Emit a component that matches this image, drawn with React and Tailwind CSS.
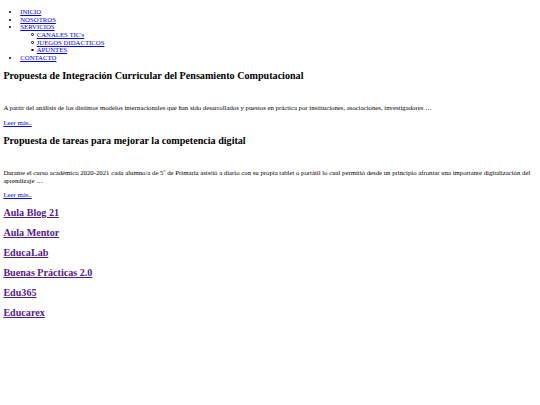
const nav = [
  { label: "INICIO" },
  { label: "NOSOTROS" },
  {
    label: "SERVICIOS",
    children: ["CANALES TIC's", "JUEGOS DIDACTICOS", "APUNTES"],
  },
  { label: "CONTACTO" },
];

const posts = [
  {
    title: "Propuesta de Integración Curricular del Pensamiento Computacional",
    text: "A partir del análisis de los distintos modelos internacionales que han sido desarrollados y puestos en práctica por instituciones, asociaciones, investigadores …",
  },
  {
    title: "Propuesta de tareas para mejorar la competencia digital",
    text: "Durante el curso académico 2020-2021 cada alumno/a de 5º de Primaria asistió a diario con su propia tablet o portátil lo cual permitió desde un principio afrontar una importante digitalización del aprendizaje …",
  },
];

const blogs = [
  "Aula Blog 21",
  "Aula Mentor",
  "EducaLab",
  "Buenas Prácticas 2.0",
  "Edu365",
  "Educarex",
];

const linkCls = "text-[#0000ee] underline";

const App = () => {
  return (
    <div className="flow-root min-h-[405px] bg-white px-[3.375px] font-['Liberation_Serif',_'Times_New_Roman',_serif] text-[6.75px] leading-[7.65px] text-black">
      <ul className="mt-[8px] mb-[6.75px] list-disc pl-[16.875px]">
        {nav.map((item) => (
          <li key={item.label}>
            <a href="#" className={linkCls}>
              {item.label}
            </a>
            {item.children && (
              <ul className="list-none pl-[16.875px]">
                {item.children.map((child) => (
                  <li key={child}>
                    {/* hollow circle marker, like list-style circle */}
                    <span className="-ml-[6.2px] mr-[3.2px] inline-block h-[2.6px] w-[2.6px] rounded-full border-[0.6px] border-black align-[1px]" />
                    <a href="#" className={linkCls}>
                      {child}
                    </a>
                  </li>
                ))}
              </ul>
            )}
          </li>
        ))}
      </ul>

      {posts.map((post) => (
        <div key={post.title}>
          <h2 className="my-[8.4px] text-[10.125px] leading-[11.6px] font-bold">
            {post.title}
          </h2>
          <p className="my-[6.75px]">&nbsp;</p>
          <p className="my-[6.75px]">{post.text}</p>
          <p className="my-[6.75px]">
            <a href="#" className={linkCls}>
              Leer más..
            </a>
          </p>
        </div>
      ))}

      {blogs.map((name) => (
        <h2
          key={name}
          className="my-[8.4px] text-[10.125px] leading-[11.6px] font-bold"
        >
          <a href="#" className="text-[#551a8b] underline">
            {name}
          </a>
        </h2>
      ))}
    </div>
  );
};

export default App;
